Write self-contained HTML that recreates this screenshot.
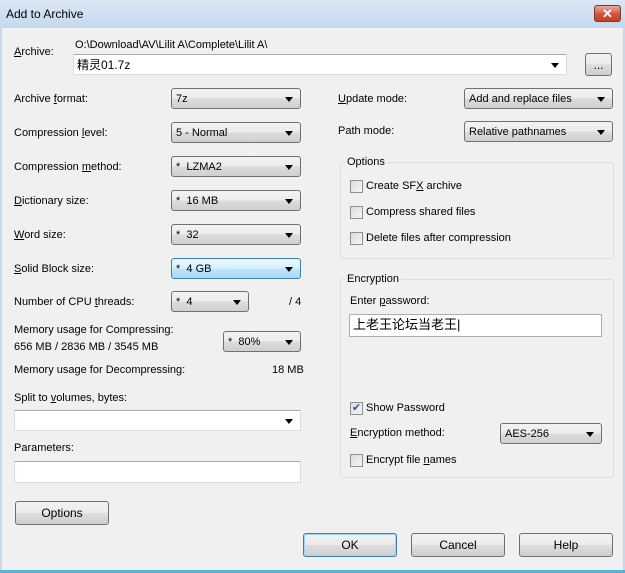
<!DOCTYPE html>
<html><head><meta charset="utf-8"><style>
*{box-sizing:border-box;margin:0;padding:0}
body{width:625px;height:573px;background:#f0f0f0;font:11px "Liberation Sans","Noto Sans CJK SC",sans-serif;color:#000;position:relative;overflow:hidden}
.a{position:absolute;white-space:nowrap;line-height:14px}
.cb{position:absolute;height:21px;border:1px solid #707070;border-radius:3px;background:linear-gradient(#f3f3f3,#ebebeb 50%,#dcdcdc 51%,#d0d0d0);padding:3px 0 0 4px;line-height:15px}
.cb.hl{border-color:#3c7fb1;background:linear-gradient(#eaf6fd,#d9f0fc 50%,#bee6fd 51%,#a7d9f5)}
.cb::after,.ed.dd::after{content:"";position:absolute;right:7px;top:8px;border-left:4px solid transparent;border-right:4px solid transparent;border-top:5px solid #000}
.ed{position:absolute;background:#fff;border:1px solid #dcdcdc;border-top-color:#abadb3;padding:2px 0 0 3px;line-height:16px}
.btn{position:absolute;height:24px;border:1px solid #707070;border-radius:3px;background:linear-gradient(#f2f2f2,#ebebeb 50%,#dddddd 51%,#cfcfcf);text-align:center;line-height:22px;font-size:12px}
.chk{position:absolute;width:13px;height:13px;border:1px solid #8e8f8f;background:linear-gradient(135deg,#dcdcdc,#f6f6f6)}
.grp{position:absolute;border:1px solid #d5dfe5;border-radius:3px}
.gl{position:absolute;background:#f0f0f0;padding:0 2px;line-height:14px}
u{text-decoration:underline}
</style></head><body>
<div style="position:absolute;left:0;top:0;width:625px;height:28px;background:linear-gradient(#dbe8f5,#c5d8ec)"></div>
<div class="a" style="left:6px;top:7px;font-size:12px">Add to Archive</div>
<div style="position:absolute;left:594px;top:5px;width:27px;height:17px;border:1px solid #7a3a32;border-radius:3px;background:linear-gradient(#e9a99b,#d2543e 55%,#c3402a);color:#fff;font-weight:bold;text-align:center;line-height:15px;font-size:13px">✕</div>
<div style="position:absolute;left:0;top:28px;width:2px;height:545px;background:#c5d8ec"></div>
<div style="position:absolute;right:0;top:28px;width:2px;height:545px;background:#c5d8ec"></div>
<div style="position:absolute;left:0;top:570px;width:625px;height:3px;background:#5bb0d8"></div>

<div class="a" style="left:14px;top:45px"><u>A</u>rchive:</div>
<div class="a" style="left:75px;top:38px">O:\Download\AV\Lilit A\Complete\Lilit A\</div>
<div class="ed dd" style="left:73px;top:54px;width:494px;height:21px;font-size:12px">精灵01.7z</div>
<div class="btn" style="left:585px;top:53px;width:27px;height:23px">...</div>

<div class="a" style="left:14px;top:92px">Archive <u>f</u>ormat:</div>
<div class="cb" style="left:171px;top:88px;width:130px">7z</div>
<div class="a" style="left:14px;top:126px">Compression <u>l</u>evel:</div>
<div class="cb" style="left:171px;top:122px;width:130px">5 - Normal</div>
<div class="a" style="left:14px;top:160px">Compression <u>m</u>ethod:</div>
<div class="cb" style="left:171px;top:156px;width:130px">* &nbsp;LZMA2</div>
<div class="a" style="left:14px;top:194px"><u>D</u>ictionary size:</div>
<div class="cb" style="left:171px;top:190px;width:130px">* &nbsp;16 MB</div>
<div class="a" style="left:14px;top:228px"><u>W</u>ord size:</div>
<div class="cb" style="left:171px;top:224px;width:130px">* &nbsp;32</div>
<div class="a" style="left:14px;top:262px"><u>S</u>olid Block size:</div>
<div class="cb hl" style="left:171px;top:258px;width:130px">* &nbsp;4 GB</div>
<div class="a" style="left:14px;top:295px">Number of CPU <u>t</u>hreads:</div>
<div class="cb" style="left:171px;top:291px;width:78px">* &nbsp;4</div>
<div class="a" style="left:289px;top:295px">/ 4</div>
<div class="a" style="left:14px;top:323px">Memory usage for Compressing:</div>
<div class="a" style="left:14px;top:340px">656 MB / 2836 MB / 3545 MB</div>
<div class="cb" style="left:223px;top:331px;width:78px">* &nbsp;80%</div>
<div class="a" style="left:14px;top:363px">Memory usage for Decompressing:</div>
<div class="a" style="left:272px;top:363px">18 MB</div>
<div class="a" style="left:14px;top:391px">Split to <u>v</u>olumes, bytes:</div>
<div class="ed dd" style="left:14px;top:410px;width:287px;height:21px"></div>
<div class="a" style="left:14px;top:441px">Parameters:</div>
<div class="ed" style="left:14px;top:461px;width:287px;height:22px"></div>
<div class="btn" style="left:15px;top:501px;width:94px">Options</div>

<div class="a" style="left:338px;top:92px"><u>U</u>pdate mode:</div>
<div class="cb" style="left:464px;top:88px;width:149px">Add and replace files</div>
<div class="a" style="left:338px;top:124px">Path mode:</div>
<div class="cb" style="left:464px;top:121px;width:149px">Relative pathnames</div>

<div class="grp" style="left:340px;top:162px;width:274px;height:97px"></div>
<div class="gl" style="left:345px;top:155px">Options</div>
<div class="chk" style="left:350px;top:180px"></div><div class="a" style="left:366px;top:179px">Create SF<u>X</u> archive</div>
<div class="chk" style="left:350px;top:206px"></div><div class="a" style="left:366px;top:205px">Compress shared files</div>
<div class="chk" style="left:350px;top:232px"></div><div class="a" style="left:366px;top:231px">Delete files after compression</div>

<div class="grp" style="left:340px;top:279px;width:274px;height:199px"></div>
<div class="gl" style="left:345px;top:272px">Encryption</div>
<div class="a" style="left:350px;top:294px">Enter <u>p</u>assword:</div>
<div class="ed" style="left:349px;top:314px;width:253px;height:23px;border-color:#abadb3;font-size:13px;padding-top:2px">上老王论坛当老王|</div>
<div class="chk" style="left:350px;top:402px;color:#2a5a9a;font-size:11px;line-height:11px;text-align:center">✔</div><div class="a" style="left:366px;top:401px">Show Password</div>
<div class="a" style="left:350px;top:426px"><u>E</u>ncryption method:</div>
<div class="cb" style="left:500px;top:423px;width:102px">AES-256</div>
<div class="chk" style="left:350px;top:454px"></div><div class="a" style="left:366px;top:453px">Encrypt file <u>n</u>ames</div>

<div class="btn" style="left:303px;top:533px;width:94px;border-color:#3c7fb1;box-shadow:inset 0 0 0 1px #9fd6f5">OK</div>
<div class="btn" style="left:411px;top:533px;width:94px">Cancel</div>
<div class="btn" style="left:519px;top:533px;width:94px">Help</div>
</body></html>
